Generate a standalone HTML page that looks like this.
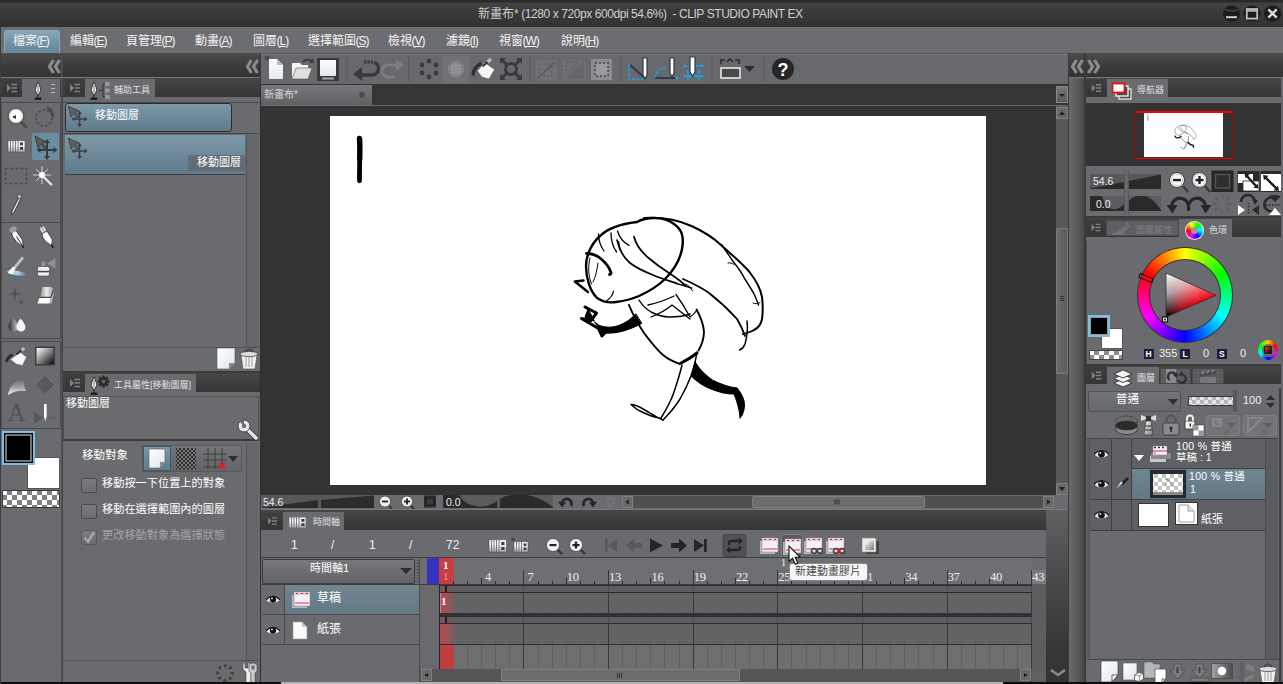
<!DOCTYPE html>
<html lang="zh-Hant">
<head>
<meta charset="utf-8">
<title>CLIP STUDIO PAINT EX</title>
<style>
*{box-sizing:border-box;margin:0;padding:0}
html,body{width:1283px;height:684px;overflow:hidden;background:#6a6b6e}
body{position:relative;font-family:"Liberation Sans","Noto Sans CJK TC",sans-serif;font-size:12px;color:#f0f0f0}
.a{position:absolute}
.t{position:absolute;white-space:nowrap;line-height:1}
#title{left:0;top:0;width:1283px;height:27px;background:linear-gradient(#2a2a2a 0,#2a2a2a 2px,#424242 3px,#3a3a3a 12px,#333 26px,#2c2c2c 27px)}
#menu{left:0;top:27px;width:1283px;height:26px;background:#6c6d70}
#menu .t{top:8px;font-size:12px;color:#f4f4f4}#menu .t i{font-style:normal;letter-spacing:-1px;margin-left:-.5px}
.dark{background:linear-gradient(#4b4b4b,#3a3a3a 60%,#333)}
.tabbar{background:linear-gradient(#464646,#363636)}
.tab{background:#6a6b6e}
.sel{background:linear-gradient(#7d98a8,#5f7b8b)}
</style>
</head>
<body>
<!-- TITLE -->
<div id="title" class="a"></div>
<div class="t" id="ttl" style="left:478px;top:8px;font-size:12px;color:#cfcfcf;letter-spacing:-.42px"><span style="letter-spacing:0">新畫布</span>* (1280 x 720px 600dpi 54.6%)&nbsp; - CLIP STUDIO PAINT EX</div>
<!-- MENU -->
<div id="menu" class="a">
<div class="a" style="left:4px;top:3px;width:56px;height:23px;border-radius:3px 3px 0 0;background:linear-gradient(#86a6ba,#6b8ca1 70%,#678699);border:1px solid #8aabbf;border-bottom:0"></div>
<div class="t" style="left:13px">檔案<i>(<u>F</u>)</i></div>
<div class="t" style="left:70px">編輯<i>(<u>E</u>)</i></div>
<div class="t" style="left:126px">頁管理<i>(<u>P</u>)</i></div>
<div class="t" style="left:195px">動畫<i>(<u>A</u>)</i></div>
<div class="t" style="left:253px">圖層<i>(<u>L</u>)</i></div>
<div class="t" style="left:308px">選擇範圍<i>(<u>S</u>)</i></div>
<div class="t" style="left:388px">檢視<i>(<u>V</u>)</i></div>
<div class="t" style="left:446px">濾鏡<i>(<u>I</u>)</i></div>
<div class="t" style="left:499px">視窗<i>(<u>W</u>)</i></div>
<div class="t" style="left:561px">說明<i>(<u>H</u>)</i></div>
</div>
<!--P1-->
<!-- window buttons -->
<svg class="a" style="left:1220px;top:3px" width="62" height="22" viewBox="0 0 62 22">
<g>
<ellipse cx="11.500" cy="10.500" rx="8.500" ry="8" fill="#1c1c1c"/><path d="M4.500 6.500q7 3 14 0" stroke="#4c4c4c" stroke-width="1.200" fill="none"/><rect x="6" y="13.200" width="11" height="2" fill="#cfcfcf"/>
<ellipse cx="32" cy="10.500" rx="8.500" ry="8" fill="#1c1c1c"/><rect x="26.800" y="6" width="10.400" height="9.600" fill="none" stroke="#c6c6c6" stroke-width="1.700"/><rect x="27" y="6.500" width="10" height="2.200" fill="#b4b4b4"/>
<ellipse cx="52.500" cy="10.500" rx="8.500" ry="8" fill="#1c1c1c"/><path d="M48.300 6.300l8.400 8.400M56.700 6.300l-8.400 8.400" stroke="#d8d8d8" stroke-width="2.400"/>
</g></svg>
<!-- collapse rows -->
<div class="a dark" style="left:0;top:53px;width:61px;height:24px"></div>
<div class="a dark" style="left:63px;top:53px;width:197px;height:24px"></div>
<div class="a" style="left:61px;top:53px;width:2px;height:631px;background:linear-gradient(90deg,#5a5a5c,#3c3c3e)"></div>
<div class="a" style="left:0;top:77px;width:260px;height:1px;background:#777"></div>
<svg class="a" style="left:44px;top:57px" width="18" height="18" viewBox="0 0 18 18"><g fill="none" stroke="#8c8c8c" stroke-width="3.200"><path d="M9.500 3L5.500 9.500l4 6.500M15.500 3l-4 6.500 4 6.500"/></g></svg>
<svg class="a" style="left:242px;top:57px" width="18" height="18" viewBox="0 0 18 18"><g fill="none" stroke="#8c8c8c" stroke-width="3.200"><path d="M9.500 3L5.500 9.500l4 6.500M15.500 3l-4 6.500 4 6.500"/></g></svg>
<!-- command bar -->
<div class="a" style="left:260px;top:53px;width:809px;height:31px;background:#68696c;border-top:1px solid #56575a;border-left:1px solid #3a3a3a;box-shadow:inset 0 1px #77787b"></div>
<svg class="a" style="left:260px;top:54px" width="540" height="30" viewBox="0 0 540 30">
<defs><linearGradient id="gw" x1="0" y1="0" x2="0" y2="1"><stop offset="0" stop-color="#fff"/><stop offset="1" stop-color="#e4e8ec"/></linearGradient></defs>
<!-- new -->
<path d="M9 5h8l6 6v14H9z" fill="url(#gw)"/><path d="M17 5l6 6h-6z" fill="#b8bcc0"/><path d="M7 1v6M4 4h6M5 2l4 4M9 2L5 6" stroke="#444" stroke-width="1"/>
<!-- open -->
<path d="M32 25V9h8l2 2h6v3" fill="#f4f4f4"/><path d="M32 25l4-11h16l-4 11z" fill="#e0e0e0" stroke="#555" stroke-width=".6"/><path d="M43 8q5-5 9 0" stroke="#3c3c3c" stroke-width="2.2" fill="none"/><path d="M49 9l5 0-1-5z" fill="#3c3c3c"/>
<!-- page -->
<rect x="57" y="4" width="22" height="23" fill="#3a3a3a"/><rect x="60" y="6" width="16" height="16" fill="url(#gw)"/><rect x="62" y="23.5" width="12" height="2" fill="#aaa"/>
<path d="M88 2v26" stroke="#6e6f72"/><path d="M87 2v26" stroke="#58595c"/>
<!-- undo -->
<path d="M104 8h8a6 6 0 0 1 0 13h-12" stroke="#3a3a3a" stroke-width="3.4" fill="none" stroke-dasharray="2.2 1.2 2.2 1.2 2.2 1.2 100"/><path d="M93 20l9-7v14z" fill="#3a3a3a"/>
<!-- redo dim -->
<path d="M138 11h-10a5.5 5.5 0 0 0 0 12h6" stroke="#7c7d80" stroke-width="3.2" fill="none"/><path d="M144 11l-8-6v12z" fill="#7c7d80"/>
<path d="M150 2v26" stroke="#6e6f72"/><path d="M149 2v26" stroke="#58595c"/>
<!-- dots -->
<g fill="#3a3a3a"><circle cx="169" cy="7" r="2.4"/><circle cx="169" cy="23" r="2.4"/><circle cx="162" cy="11" r="2.4"/><circle cx="176" cy="11" r="2.4"/><circle cx="162" cy="19" r="2.4"/><circle cx="176" cy="19" r="2.4"/></g>
<!-- select all -->
<rect x="183" y="2" width="26" height="27" fill="#707174"/><path d="M192 5h8v4h4v8h-4v4h-8v-4h-4v-8h4z" fill="#85868a" transform="translate(0 2)"/><rect x="190" y="9" width="12" height="12" fill="#8f9093" stroke="#707174" stroke-width="1" stroke-dasharray="2 1"/>
<!-- fill -->
<path d="M217.500 17l7-8.500 10 7-5.500 9.500-7-2z" fill="#f6f6f6" stroke="#555" stroke-width=".5"/><path d="M213 21.500q0-8 8.500-12.500" stroke="#2e2e30" stroke-width="3.200" fill="none"/><path d="M222.500 12.500l8-7" stroke="#2e2e30" stroke-width="1.800"/><path d="M227.500 8l3.500-3" stroke="#bcbcbe" stroke-width="3.400"/>
<!-- expand -->
<g stroke="#3a3a3a" stroke-width="3" fill="none"><circle cx="251" cy="15" r="5.5"/><path d="M242 6l5 5M260 6l-5 5M242 24l5-5M260 24l-5-5"/></g><g fill="#3a3a3a"><path d="M240 4h6l-6 6zM262 4h-6l6 6zM240 26h6l-6-6zM262 26h-6l6-6z"/></g>
<path d="M271 2v26" stroke="#6e6f72"/><path d="M270 2v26" stroke="#58595c"/>
<!-- dim 3 -->
<g opacity=".55"><rect x="276" y="6" width="21" height="20" fill="#777"/><path d="M278 24l17-16" stroke="#555" stroke-width="2"/><rect x="279" y="10" width="13" height="12" fill="none" stroke="#555" stroke-dasharray="2 2"/>
<rect x="303" y="6" width="22" height="20" fill="#777"/><path d="M304 25l20-18v18z" fill="#666"/><path d="M306 8h12l-12 12z" fill="none" stroke="#555" stroke-dasharray="2 2"/></g>
<rect x="331" y="5" width="21" height="21" fill="#8b8c8f"/><rect x="335" y="9" width="13" height="13" fill="#9a9b9e" stroke="#55565a" stroke-width="2" stroke-dasharray="2 2"/>
<path d="M362 2v26" stroke="#6e6f72"/><path d="M361 2v26" stroke="#58595c"/>
<!-- snap icons -->
<path d="M369 10l17 15" stroke="#2c3a48" stroke-width="2"/><path d="M369 10v15h17" stroke="#1ea0f0" stroke-width="1.6" fill="none" stroke-dasharray="3 1.5"/><path d="M383 4h4v17l-2 4-2-4z" fill="#fff" stroke="#2c3a48" stroke-width="1.2"/>
<path d="M395 24q1-10 12-10" stroke="#1ea0f0" stroke-width="1.6" fill="none" stroke-dasharray="3 1.5"/><path d="M395 24h20" stroke="#2c3a48" stroke-width="2"/><path d="M410 4h4v15l-2 4-2-4z" fill="#fff" stroke="#2c3a48" stroke-width="1.2"/><circle cx="417" cy="24" r="1.6" fill="#1ea0f0"/>
<path d="M423 12h21M423 22h21M428 16v11M439 16v11" stroke="#1ea0f0" stroke-width="1.8" stroke-dasharray="4 1.5"/><path d="M430 3h5v15l-2.5 4-2.500-4z" fill="#fff" stroke="#2c3a48" stroke-width="1.2"/>
<path d="M453 2v26" stroke="#6e6f72"/><path d="M452 2v26" stroke="#58595c"/>
<!-- frame -->
<path d="M461 10V6h4M479 10V6h-4M467 8l3-3 3 3" stroke="#2e2e2e" stroke-width="1.6" fill="none"/><rect x="461" y="14" width="19" height="10" fill="#4a4a4a" stroke="#e8e8e8" stroke-width="1.6"/><path d="M484 12h11l-5.500 6z" fill="#2e2e2e"/>
<path d="M505 2v26" stroke="#6e6f72"/><path d="M504 2v26" stroke="#58595c"/>
<circle cx="523" cy="15" r="11" fill="#262626"/><text x="523" y="21.500" font-family="Liberation Sans,sans-serif" font-weight="bold" font-size="18" fill="#fff" text-anchor="middle">?</text>
</svg>
<!-- canvas tab row -->
<div class="a" style="left:260px;top:84px;width:809px;height:22px;background:#353535;border-bottom:1px solid #6a6a6a"></div>
<div class="a" style="left:261px;top:85px;width:111px;height:20px;background:linear-gradient(#77787b,#5f6063)"></div>
<div class="t" style="left:264px;top:90px;font-size:10px;color:#d8d8d8">新畫布*</div>
<div class="a" style="left:359px;top:92px;width:6px;height:6px;border-radius:3px;background:#4c4c4c"></div>
<div class="a" style="left:1056px;top:86px;width:12px;height:17px;background:linear-gradient(#777,#5a5a5a);border:1px solid #888"></div>
<div class="a" style="left:1059px;top:94px;border:3px solid transparent;border-top:3px solid #222;width:0;height:0"></div>
<!--/P1-->
<!--P2-->
<!-- TOOL PALETTE -->
<svg width="0" height="0" style="position:absolute"><defs>
<symbol id="pm" viewBox="0 0 20 18"><rect width="20" height="18" fill="#3c3c3c"/><rect y="9" width="20" height="9" fill="#363636"/><path d="M5 5l4 4-4 4z" fill="#808080"/><path d="M9.500 5.500h5.500M9.500 9h5.500M9.500 12.500h5.500" stroke="#808080" stroke-width="1.500"/></symbol>
<symbol id="eye" viewBox="0 0 16 10"><path d="M0 5.500Q8-3 16 5.500Q8 12 0 5.500z" fill="#f0f0f0"/><circle cx="8" cy="5" r="3.600" fill="#111"/><circle cx="6.800" cy="3.800" r="1" fill="#fff"/><path d="M0 5.500Q8-3 16 5.500" stroke="#111" stroke-width="1.300" fill="none"/></symbol>
<symbol id="penic" viewBox="0 0 12 22"><path d="M6 0Q2.500 8 3 10.500L5 15h2l2-4.500Q9.500 8 6 0z" fill="#fff" stroke="#222" stroke-width="1"/><path d="M6 4v9" stroke="#222" stroke-width=".8"/><path d="M6 15v4" stroke="#222" stroke-width="1.400"/><rect x="2" y="19" width="8" height="2.500" fill="#111"/></symbol>
<linearGradient id="gm" x1="0" y1="0" x2="1" y2="1"><stop offset="0" stop-color="#fff"/><stop offset="1" stop-color="#777"/></linearGradient>
<pattern id="chk" width="10" height="10" patternUnits="userSpaceOnUse"><rect width="10" height="10" fill="#fff"/><rect x="5" width="5" height="5" fill="#808080"/><rect y="5" width="5" height="5" fill="#808080"/></pattern>
</defs></svg>
<div class="a tabbar" style="left:0;top:78px;width:61px;height:19px"></div>
<svg class="a" style="left:2px;top:79px" width="20" height="18"><use href="#pm"/></svg>
<div class="a tab" style="left:22px;top:79px;width:38px;height:19px"></div>
<svg class="a" style="left:33px;top:81px" width="10" height="20"><use href="#penic"/></svg>
<div class="a" style="left:51px;top:84px;width:4px;height:1px;background:#bbb;box-shadow:0 4px #bbb,0 8px #bbb"></div>
<div class="a" style="left:1px;top:102px;width:60px;height:121px;border:1px solid #4c4c4f"></div>
<div class="a" style="left:1px;top:222px;width:60px;height:117px;border:1px solid #4c4c4f"></div>
<div class="a" style="left:1px;top:341px;width:60px;height:88px;border:1px solid #4c4c4f"></div>
<div class="a" style="left:32px;top:133px;width:27px;height:27px;background:#6b8da2;border-radius:2px"></div>
<svg class="a" style="left:0;top:102px" width="62" height="330" viewBox="0 102 62 330">
<!-- magnifier -->
<path d="M20 121l7 7" stroke="#4a4a4a" stroke-width="3"/><circle cx="16" cy="116" r="6.500" fill="#fff" stroke="#dcdcdc" stroke-width="1.500"/><circle cx="16" cy="116" r="8" fill="none" stroke="#4a4a4a" stroke-width=".8"/><path d="M12 117l4-2v4z" fill="#333"/>
<!-- rotate -->
<circle cx="44" cy="118" r="8" fill="none" stroke="#48494c" stroke-width="1.600" stroke-dasharray="2.500 2"/><path d="M47 108q6 2 6 9" stroke="#48494c" stroke-width="2.500" fill="none"/>
<!-- film -->
<rect x="8" y="140.500" width="17" height="11.500" fill="url(#gf)" stroke="#505154" stroke-width=".6"/><path d="M10.500 141v11M13 141v11M15.500 141v11M18 141v11" stroke="#6a6b6e" stroke-width=".9"/><rect x="20" y="142.500" width="3" height="2.800" fill="#3a3a5c"/><rect x="20" y="147" width="3" height="2.800" fill="#3a3a5c"/>
<!-- move -->
<path d="M35 136l3 12 2.500-3.500 4 5 2-1.500-4-5 4-1z" fill="#5a5a5a" stroke="#333" stroke-width=".8"/><path d="M47 142v16M39 150h16" stroke="#3a3a3a" stroke-width="2"/><path d="M47 139l3 4h-6zM47 160l3-4h-6zM36.500 150l4-3v6zM57.500 150l-4-3v6z" fill="#3a3a3a"/>
<!-- dashed rect -->
<rect x="5.500" y="168.500" width="21" height="15" fill="none" stroke="#4a4a4d" stroke-width="1.400" stroke-dasharray="3 2"/>
<!-- wand -->
<path d="M42 175l10 10" stroke="#ddd" stroke-width="2.600"/><path d="M43 176l9 9" stroke="#555" stroke-width=".8" transform="translate(1 -1)"/><path d="M42 166v18M33 175h18M36 169l12 12M48 169l-12 12" stroke="#e8e8e8" stroke-width="1" opacity=".8"/><circle cx="42" cy="175" r="3" fill="#fff"/>
<!-- eyedropper -->
<path d="M19 197l-7 14-1 4 3-2.500 7-14z" fill="#ddd" stroke="#3a3a3a" stroke-width="1"/><circle cx="19.500" cy="196.500" r="2.200" fill="#bbb" stroke="#3a3a3a" stroke-width=".8"/>
<!-- pen -->
<path d="M11.500 232.500l4.500-2 6.500 9.500.8 7-6.300-4.500-4.500-6z" fill="#f4f4f4" stroke="#3a3a3a" stroke-width=".9"/><ellipse cx="13" cy="229.500" rx="3.800" ry="2.800" fill="#9c9d9f" transform="rotate(-25 13 229.500)"/><path d="M16.500 236.500l6.200 9.800" stroke="#2a2a2a" stroke-width="1"/><path d="M22.500 245.500l1 2.500" stroke="#222" stroke-width="1.400"/>
<!-- brush pen -->
<path d="M42 233.500l5-2.500 5.500 9-1 5.500-5.500-3.500-3.500-5z" fill="#fafafa" stroke="#3a3a3a" stroke-width=".9"/><path d="M38.500 228.500l6-3 2.500 5-5 3z" fill="#b0b1b3" stroke="#444" stroke-width=".6"/><path d="M40.500 227.500l2.500 5M42.800 226.300l2.500 5" stroke="#f0f0f0" stroke-width="1"/><path d="M51.500 245l1.800 2.800" stroke="#222" stroke-width="1.800"/>
<!-- brush -->
<defs><linearGradient id="bl" x1="0" y1="0" x2="1" y2="0"><stop offset="0" stop-color="#8cc8f4"/><stop offset=".55" stop-color="#a8d4f4"/><stop offset="1" stop-color="#c8b8e0" stop-opacity=".2"/></linearGradient></defs>
<ellipse cx="16.500" cy="273" rx="9.500" ry="2.300" fill="url(#bl)" transform="rotate(9 16.500 273)"/><path d="M23 257.500l-8.500 10.500" stroke="#c4c4c6" stroke-width="2.800"/><path d="M24.200 258.300l-8.500 10.500" stroke="#77787a" stroke-width=".9"/><circle cx="13.500" cy="268.500" r="1.800" fill="#fff"/><path d="M12 268l3 3-3 3.500-4-1.500q1-3 4-5z" fill="#f8f8f8"/>
<!-- spray -->
<rect x="37.500" y="266.500" width="12" height="9.500" rx="2" fill="#f2f2f2" stroke="#4a4a4a" stroke-width=".7"/><rect x="37.500" y="270.800" width="12" height="1.600" fill="#4a4a4a"/><rect x="41" y="261" width="5" height="5.500" fill="#909193" stroke="#555" stroke-width=".5"/><path d="M47 263.500l8.500-5.500v10.500z" fill="#8d8e91"/>
<!-- sparkle -->
<path d="M15 287l1 6 6 1-6 1-1 6-1-6-6-1 6-1z" fill="#4c4d50"/><path d="M21 298l.7 3.300 3.300.7-3.300.7-.7 3.300-.7-3.300-3.300-.7 3.300-.7z" fill="#4c4d50"/>
<!-- eraser -->
<defs><linearGradient id="ge" x1="0" y1="0" x2="1" y2="0"><stop offset="0" stop-color="#8a8a8c"/><stop offset=".5" stop-color="#e8e8e8"/><stop offset="1" stop-color="#a0a0a2"/></linearGradient></defs>
<path d="M42 286.500h9.500l2 2.500-2.500 8.500h-11.500z" fill="url(#ge)" stroke="#505154" stroke-width=".6"/><path d="M39.500 297.500h11.500l-1.500 6h-12z" fill="#fafafa"/><path d="M51 297.500l2.500-8.500v6l-2 8.500h-2z" fill="#b8b8ba"/><path d="M39.500 297.300h11.500l2.300-7" stroke="#2e2e2e" stroke-width="1" fill="none"/>
<!-- blend drops -->
<defs><linearGradient id="gdp" x1="0" y1="0" x2="1" y2="0"><stop offset="0" stop-color="#2a2a2c"/><stop offset="1" stop-color="#c8c8ca"/></linearGradient></defs>
<path d="M13 317.500q7 8 4 12.500q-4 3-7.500 0q-3.500-5 3.500-12.500z" fill="url(#gdp)"/><path d="M20.500 318.500q7 7.500 4 11.500q-3.500 3-7 0q-3-4 3-11.500z" fill="#f6f6f6"/>
<!-- fill -->
<path d="M10.500 359.500l9.500-7.500 6.500 5-4 8.500-6.500-1.500z" fill="#f6f6f6" stroke="#58595c" stroke-width=".5"/><path d="M12.500 354.500q-5 2.500-6 7.500" stroke="#2e2e30" stroke-width="3" fill="none"/><path d="M16.500 354.500l7-6" stroke="#2e2e30" stroke-width="1.800"/><path d="M21.500 350.500l3-2.500" stroke="#b8b8ba" stroke-width="3"/>
<!-- gradient -->
<linearGradient id="gd" x1="0" y1="0" x2="1" y2="1"><stop offset="0" stop-color="#fff"/><stop offset=".5" stop-color="#8a8486"/><stop offset="1" stop-color="#0c0808"/></linearGradient>
<rect x="35" y="346.500" width="20" height="19" fill="#3c3c3e"/><rect x="36.500" y="348" width="17" height="16" fill="url(#gd)"/>
<!-- contour -->
<linearGradient id="gc" x1="0" y1="0" x2="0" y2="1"><stop offset="0" stop-color="#58595c"/><stop offset=".6" stop-color="#a8a8aa"/><stop offset="1" stop-color="#fff"/></linearGradient>
<path d="M8 395q2-14 17.500-17.500q-3 7 .5 13.500q-10-1.500-18 4z" fill="url(#gc)"/>
<!-- pattern -->
<g stroke="#515255" stroke-width="1.300" fill="none"><path d="M37.500 385l7.500-7.500 7.500 7.500-7.500 7.500zM41.200 381.200l7.600 7.600M48.800 381.200l-7.600 7.600M39.300 383.100l7.600 7.600M43.100 379.300l7.600 7.600M50.700 383.100l-7.600 7.600M46.900 379.300l-7.600 7.600"/></g>
<!-- text A -->
<text x="16.500" y="421" font-family="Liberation Serif,serif" font-size="25" fill="#4e4f52" text-anchor="middle">A</text>
<!-- correct -->
<path d="M34 412l9 6-9 6z" fill="#555659"/><path d="M43 418h13" stroke="#555659" stroke-width="1"/><rect x="44" y="404" width="2.600" height="13" fill="#fff"/><path d="M44 417l1.300 4.500 1.300-4.500z" fill="#e4e4e4"/>
</svg>
<!-- colours -->
<div class="a" style="left:2px;top:431px;width:33px;height:34px;border:2px solid #78c0ea;background:#000;box-shadow:inset 0 0 0 1.5px #000,inset 0 0 0 2.5px #e4e4e4;z-index:2"></div>
<div class="a" style="left:27px;top:457px;width:33px;height:32px;background:#fff;border:1px solid #555"></div>
<svg class="a" style="left:2px;top:490px" width="58" height="18"><rect x="1" y="1" width="56" height="16" fill="url(#chk)"/><rect x=".5" y=".5" width="57" height="17" fill="none" stroke="#3a3a3a"/></svg>
<!--/P2-->
<!--P3-->
<!-- SUBTOOL PANEL -->
<div class="a tabbar" style="left:63px;top:78px;width:197px;height:19px"></div>
<svg class="a" style="left:65px;top:79px" width="20" height="18"><use href="#pm"/></svg>
<div class="a tab" style="left:85px;top:79px;width:70px;height:19px"></div>
<svg class="a" style="left:89px;top:81px" width="10" height="20"><use href="#penic"/></svg>
<svg class="a" style="left:99px;top:82px" width="12" height="18" viewBox="0 0 12 18"><path d="M0 8.500h4M4 2v13M4 2h3M4 15h3" stroke="#333" stroke-width="1" fill="none"/><rect x="6" y="0" width="4.500" height="4" fill="#999"/><rect x="6" y="6.500" width="4.500" height="4" fill="#999"/><rect x="6" y="13" width="4.500" height="4" fill="#999"/></svg>
<div class="t" style="left:114px;top:86px;font-size:9px;color:#e0e0e0">輔助工具</div>
<div class="a" style="left:63px;top:102px;width:196px;height:1px;background:#4a4a4d"></div>
<div class="a sel" style="left:65px;top:103px;width:167px;height:29px;border:1px solid #2c2c2c;border-radius:3px"></div>
<div class="t" style="left:95px;top:110px;font-size:11px;color:#fff">移動圖層</div>
<div class="a" style="left:63px;top:133px;width:196px;height:1px;background:#444"></div>
<div class="a sel" style="left:65px;top:135px;width:180px;height:40px;border-bottom:1px solid #3a3a3a"></div>
<div class="a" style="left:188px;top:155px;width:57px;height:16px;background:rgba(95,100,106,.75)"></div>
<div class="t" style="left:197px;top:157px;font-size:11px;color:#fff">移動圖層</div>
<svg class="a" style="left:66px;top:104px" width="24" height="60" viewBox="0 0 24 60"><g id="mv"><path d="M2 2l3 11 2.500-3.500 3.500 4.500 1.800-1.400-3.600-4.600 4-1z" fill="#5a6268" stroke="#333" stroke-width=".7"/><path d="M13.500 9v12M7.500 15h12" stroke="#3a3f44" stroke-width="1.600"/><path d="M13.500 7l2.500 3h-5zM13.500 23l2.500-3h-5zM5.500 15l3-2.500v5zM21.500 15l-3-2.500v5z" fill="#3a3f44"/></g><use href="#mv" y="32"/></svg>
<div class="a" style="left:246px;top:135px;width:12px;height:212px;background:#656669;border-left:1px solid #55565a"></div>
<div class="a" style="left:63px;top:347px;width:196px;height:1px;background:#515255"></div>
<svg class="a" style="left:215px;top:347px" width="44" height="24" viewBox="0 0 44 24"><path d="M2 1h18v15l-6 6H2z" fill="url(#gw2)" stroke="#555" stroke-width=".6"/><path d="M20 16l-6 6v-6z" fill="#8a8a8a"/><linearGradient id="gw2" x1="0" y1="0" x2="1" y2="1"><stop offset="0" stop-color="#fff"/><stop offset="1" stop-color="#dfe6ec"/></linearGradient>
<path d="M26 8h16l-2 14H28z" fill="#f2f2f2" stroke="#555" stroke-width=".7"/><path d="M31 10v10M34 10v10M37 10v10" stroke="#999" stroke-width="1"/><ellipse cx="34" cy="7" rx="9" ry="2.600" fill="#ddd" stroke="#444" stroke-width=".8"/><path d="M30 5q4-6 8 0" stroke="#444" stroke-width="1.400" fill="none"/></svg>
<div class="a" style="left:63px;top:371px;width:197px;height:2px;background:#3a3a3a"></div>
<!-- TOOL PROPERTY -->
<div class="a tabbar" style="left:63px;top:373px;width:197px;height:19px"></div>
<svg class="a" style="left:65px;top:374px" width="20" height="18"><use href="#pm"/></svg>
<div class="a tab" style="left:85px;top:374px;width:111px;height:19px"></div>
<svg class="a" style="left:89px;top:376px" width="10" height="20"><use href="#penic"/></svg>
<svg class="a" style="left:97px;top:375px" width="13" height="13" viewBox="-6.500 -6.500 13 13"><g fill="#2c2c2c"><circle r="4.200"/><g id="gt"><rect x="-1.300" y="-6" width="2.600" height="12"/><rect x="-1.300" y="-6" width="2.600" height="12" transform="rotate(45)"/><rect x="-1.300" y="-6" width="2.600" height="12" transform="rotate(90)"/><rect x="-1.300" y="-6" width="2.600" height="12" transform="rotate(135)"/></g></g><circle r="1.800" fill="#6a6b6e"/></svg>
<div class="t" style="left:114px;top:381px;font-size:9px;color:#e0e0e0">工具屬性[移動圖層]</div>
<div class="a" style="left:63px;top:396px;width:196px;height:45px;border:1px solid #505154;border-bottom:2px solid #3a3a3a"></div>
<div class="t" style="left:66px;top:398px;font-size:11px;color:#fff">移動圖層</div>
<svg class="a" style="left:236px;top:418px" width="23" height="23" viewBox="0 0 23 23"><path d="M10 10l10 10" stroke="#444" stroke-width="5.500" stroke-linecap="round"/><path d="M10 10l10 10" stroke="#e8e8e8" stroke-width="3.500" stroke-linecap="round"/><circle cx="8" cy="8" r="6" fill="#e8e8e8" stroke="#444" stroke-width="1"/><path d="M8 8L2 2h6z" fill="#6a6b6e"/><circle cx="8" cy="8" r="2.200" fill="#6a6b6e"/></svg>
<div class="a" style="left:246px;top:443px;width:12px;height:217px;background:#656669;border-left:1px solid #55565a"></div>
<div class="t" style="left:82px;top:450px;font-size:11.500px;color:#fff">移動對象</div>
<div class="a" style="left:142px;top:445px;width:100px;height:27px;border:1px solid #555659;border-radius:2px;background:linear-gradient(#747578,#636467)"></div>
<div class="a" style="left:143px;top:446px;width:28px;height:25px;background:linear-gradient(#7898ac,#5b7a8c);border:1px solid #445866"></div>
<svg class="a" style="left:143px;top:446px" width="98" height="25" viewBox="0 0 98 25"><path d="M6 3h16v13l-5 6H6z" fill="url(#gw2)" stroke="#555" stroke-width=".6"/><path d="M22 16l-5 6v-6z" fill="#8a8a8a"/>
<pattern id="dk" width="4" height="4" patternUnits="userSpaceOnUse"><rect width="4" height="4" fill="#2e2e2e"/><rect width="2" height="2" fill="#777"/><rect x="2" y="2" width="2" height="2" fill="#777"/></pattern>
<rect x="33" y="2" width="20" height="22" fill="url(#dk)"/>
<path d="M65 2v21M72 2v21M79 2v17M60 8h24M60 14h24M60 21h17" stroke="#3c3c3c" stroke-width="1"/><path d="M76 17l6 6M82 17l-6 6" stroke="#e02020" stroke-width="2.200"/><path d="M85 10h10l-5 6z" fill="#2e2e2e"/></svg>
<div class="a" style="left:81px;top:478px;width:16px;height:15px;border:1px solid #4c4c4f;border-radius:2px;background:linear-gradient(#7a7b7e,#6c6d70)"></div>
<div class="a" style="left:81px;top:504px;width:16px;height:15px;border:1px solid #4c4c4f;border-radius:2px;background:linear-gradient(#7a7b7e,#6c6d70)"></div>
<div class="a" style="left:81px;top:530px;width:16px;height:15px;border:1px solid #58595c;border-radius:2px;background:linear-gradient(#7a7b7e,#6c6d70)"></div>
<svg class="a" style="left:82px;top:531px" width="14" height="14" viewBox="0 0 14 14"><path d="M2.500 6.500l3.500 4 6-9" stroke="#a8a9ab" stroke-width="2.400" fill="none"/></svg>
<div class="t" style="left:102px;top:478px;font-size:11.200px;color:#fff">移動按一下位置上的對象</div>
<div class="t" style="left:102px;top:504px;font-size:11.200px;color:#fff">移動在選擇範圍內的圖層</div>
<div class="t" style="left:102px;top:530px;font-size:11.200px;color:#a2a3a6">更改移動對象為選擇狀態</div>
<div class="a" style="left:63px;top:660px;width:196px;height:1px;background:#515255"></div>
<svg class="a" style="left:213px;top:661px" width="46" height="23" viewBox="0 0 46 23"><g transform="translate(12 12)" fill="#3c3c3c"><g id="sp"><path d="M-1.500 -9l4 1-3 3z"/></g><use href="#sp" transform="rotate(45)"/><use href="#sp" transform="rotate(90)"/><use href="#sp" transform="rotate(135)"/><use href="#sp" transform="rotate(180)"/><use href="#sp" transform="rotate(225)"/><use href="#sp" transform="rotate(270)"/><use href="#sp" transform="rotate(315)"/></g>
<path d="M30 2v6l3 3v12h5V11l-1-2V2h-2v5h-3V2z" fill="#eee" stroke="#444" stroke-width=".6"/><path d="M36 4q4-4 8 0v6l-2 2v11h-4V12l-2-2z" fill="#ccc" stroke="#444" stroke-width=".6"/><path d="M38.500 4.500h3v4h-3z" fill="#6a6b6e"/></svg>
<!--/P3-->
<!--P4-->
<!-- CANVAS AREA -->
<div class="a" style="left:260px;top:106px;width:795px;height:389px;background:#333"></div>
<div class="a" style="left:260px;top:85px;width:1px;height:599px;background:#2e2e2e"></div>
<div class="a" style="left:330px;top:116px;width:656px;height:369px;background:#fff"></div>
<svg class="a" style="left:330px;top:116px" width="656" height="369" viewBox="330 116 656 369" fill="none" stroke="#000" stroke-linecap="round" stroke-linejoin="round">
<path d="M359.500 138.500c.6 8 .3 14 .2 20" stroke-width="5.400"/><path d="M359.700 158c0 8-.3 15-.2 22.800" stroke-width="4.800"/>
<g id="girl">
<!-- head -->
<path d="M637 222c-17 2-30 7-37 14-9 8-14 20-14 30 0 12 4 25 11 32 6 4 13 5 19 4 8-1 16-3 23-6 11-5 20-11 26-17 9-9 16-21 17.500-33 1-9 0-16-8.500-22-5-4-12-6-19-6-7 0-13 1-18 4z" stroke-width="2.400"/>
<!-- outer hair -->
<path d="M644 218c16-1 32 1 47.500 8 11 5 21 11 29.500 19 11 10 21 18 28.500 27 7 9 11 16 12.500 25 1 8 1 15 0 22-1 6-4 9-8 11-3 2-7 3-11 4" stroke-width="2"/>
<path d="M721.500 244.500c4 6 8 11.500 12 17.500 4.500 5.500 8.500 11 11 16.500 4 6 8 12 10.500 17.500 1.500 3.500 2.500 6 3.500 9" stroke-width="1.400"/>
<path d="M728 263c2-.5 4 0 6 1.500M753 303c2 1 5 1 7-.5" stroke-width="1"/>
<path d="M747 321c1 8 0 16-2 23-1 3-3 5-5.500 6" stroke-width="1.500"/>
<!-- inner hair curves -->
<path d="M634 236.500c2 9 7 15 14 21 7 6 14 11 21 15.500 6 4 12 8 17 13" stroke-width="1.700"/>
<path d="M617 240c2 9 6 17 13 23 9 7 18 10 28 14 8 3 15 5 20 7 5 1 10 3 13.500 4" stroke-width="1.700"/>
<path d="M683 279c9 4 18 8 26 14 9 7 19 16 28 26 3 5 6 11 8 17" stroke-width="1.800"/>
<path d="M686 284c3 2 5 4 6.500 7" stroke-width="1"/>
<!-- bangs -->
<path d="M598.500 234c0 6 2 12 5.500 17M611 233c0 7 2 14 5.600 19M617.500 231c2 7 6 11.500 11.500 14.400M618.500 241.600c.5 4 1.500 8 3.500 11.400" stroke-width="1.300"/>
<!-- face -->
<path d="M586.500 253.500c5 0 9.500 1.500 13.500 4.500 5 4 9 8 11 14.500 0 1.500-.5 2-1.500 2" stroke-width="2.800"/>
<path d="M590 258c-2 8-2 17 1.500 26M598 263c-1 7-2 13-5 19" stroke-width="1"/>
<path d="M583.500 280.500l-8.700 1 13.200 10.500" stroke-width="2.400"/>
<path d="M613.500 291c-.5 4-3 7-6.500 9.500" stroke-width="1.200"/>
<!-- collar -->
<path d="M639 300c3 5 7 9 12 12 6 3 12 5 18 5 7 0 14 0 21-3" stroke-width="1.400"/>
<path d="M648 305c9-2 18-5 26-9M651 317c8-3 15-7 21-12l18 14M676 294.500c5 7 10 15 14 22.500 3-2 5-4 7-7" stroke-width="1.300"/>
<!-- body -->
<path d="M629 305c4 10 9 19 15 28 6 8 12 16 19 22 5 4 11 7 17 9" stroke-width="2"/>
<path d="M696.500 309.500c3.500 6 6.500 13 7.500 22 0 7-2 13-5.500 19" stroke-width="1.900"/>
<path d="M681 363c6-3 11-6 16-10" stroke-width="3"/>
<!-- front leg -->
<path d="M682 365c-2 9-5 18-8 27-3 9-8 18-13 26" stroke-width="1.500"/>
<path d="M697 352c-1 8-3 16-6 24-3 8-7 16-11 23-5 8-11 15-17 21" stroke-width="1.500"/>
<path d="M661 418.500c-6-1-12-3-18-6-5-2-9-5-12-8 3 0 8 2 13 5 7 4 13 8 19 10.500" stroke-width="1.500"/>
<!-- arm filled -->
<path d="M635.500 314c-4 5-10 9-17 11.500-7 2.500-14 2-20 -.5l-4-3 8 11c7 .5 14 0 21-2 6-2 12-4 18-7.500z" fill="#000" stroke-width="1"/>
<path d="M585 307l11.500 6-5.500 7.500-9.500-2 17 10 3.500 7.500 5.500-6" stroke-width="3"/>
<path d="M588 309l-3 8 9 4z" fill="#000" stroke-width="1"/>
<!-- back leg filled -->
<path d="M695 362c4 7 10 13 17 18 8 4 16 7 25 8 3 4 6 8 7 13 1 6 0 12-4 17 0-6-1.500-11-3-16-1-4-2-6-3-8-8 0-16-2-24-5.500-7-3-13-7-18.500-12.500z" fill="#000" stroke-width="1.200"/>
</g>
</svg>
<!-- v scrollbar -->
<div class="a" style="left:1055px;top:106px;width:14px;height:389px;background:#58585a;border-left:1px solid #333"></div>
<div class="a" style="left:1056px;top:228px;width:12px;height:146px;background:linear-gradient(90deg,#6c6c6e,#5c5c5e);border:1px solid #7c7c7e;border-radius:1px"></div>
<div class="a" style="left:1056px;top:107px;width:12px;height:12px;background:#68686a;border:1px solid #808082"></div>
<div class="a" style="left:1056px;top:483px;width:12px;height:12px;background:#68686a;border:1px solid #808082"></div>
<div class="a" style="left:1059px;top:108px;border:3px solid transparent;border-bottom:4px solid #222;width:0;height:0"></div>
<div class="a" style="left:1059px;top:487px;border:3px solid transparent;border-top:4px solid #222;width:0;height:0"></div>
<div class="a" style="left:1060px;top:296px;width:4px;height:1px;background:#333;box-shadow:0 2px #333,0 4px #333"></div>
<!--/P4-->
<!--P5-->
<!-- STATUS BAR -->
<div class="a" style="left:261px;top:495px;width:794px;height:14px;background:#6a6b6e"></div>
<svg class="a" style="left:261px;top:495px" width="794" height="14" viewBox="261 495 794 14">
<rect x="262" y="495" width="56" height="13" fill="#3a3a3a"/><path d="M262 508h56v-13z" fill="#5c5c5e" transform="translate(580 0) scale(-1 1)" opacity="0"/>
<rect x="262" y="495" width="56" height="13" fill="#2c2c2c"/><path d="M262 495h56v5l-56 7.500z" fill="#58585a"/>
<rect x="318" y="495" width="3" height="13" fill="#5a5a5c"/>
<rect x="321" y="495" width="53" height="13" fill="#2c2c2c"/><path d="M321 495h53v.5l-53 4.500z" fill="#58585a"/>
<g id="zm"><path d="M389 506l3 3" stroke="#333" stroke-width="2"/><circle cx="385" cy="501.500" r="5.500" fill="#f0f0f0" stroke="#444" stroke-width=".8"/><rect x="382" y="500.600" width="6" height="1.800" fill="#222"/></g>
<g><path d="M411 506l3 3" stroke="#333" stroke-width="2"/><circle cx="407" cy="501.500" r="5.500" fill="#f0f0f0" stroke="#444" stroke-width=".8"/><rect x="404" y="500.600" width="6" height="1.800" fill="#222"/><rect x="406.100" y="498.500" width="1.800" height="6" fill="#222"/></g>
<rect x="424" y="495.500" width="12" height="12" fill="#2a2a2a"/><rect x="426.500" y="498" width="7" height="7" fill="#3c3c3c" stroke="#1a1a1a"/>
<rect x="443" y="495" width="54" height="13" fill="#2a2a2a"/><path d="M459 495h38v6q-8 6-19 5.500q-13-1-19-11.500z" fill="#5c5c5f"/>
<rect x="497" y="495" width="3" height="13" fill="#5a5a5c"/>
<rect x="500" y="495" width="53" height="13" fill="#5c5c5f"/><path d="M500 508v-9q6-4 14-4h13q13 2 26 12v1z" fill="#2a2a2a"/>
<g fill="none" stroke="#262626" stroke-width="2.800"><path d="M562 504a4.800 4.800 0 1 1 9 2"/><path d="M593 504a4.800 4.800 0 1 0-9 2"/></g><path d="M558 501.500l4 6 4-5zM597 501.500l-4 6-4-5z" fill="#262626"/>
<circle cx="610" cy="502" r="4" fill="none" stroke="#7c7d80" stroke-width="2" stroke-dasharray="1.600 1.500"/>
<rect x="622" y="496" width="432" height="12" fill="#505052"/><rect x="622.500" y="496.500" width="10" height="11" fill="#68686a" stroke="#808082"/><rect x="1043.500" y="496.500" width="10" height="11" fill="#68686a" stroke="#808082"/><path d="M629 499.500v5l-3.500-2.500zM1047 499.500v5l3.500-2.500z" fill="#222"/>
<rect x="752.500" y="496.500" width="172" height="11" rx="1" fill="#6c6c6e" stroke="#7e7e80"/><path d="M835 499.500v5M837 499.500v5M839 499.500v5" stroke="#333" stroke-width="1"/>
</svg>
<div class="t" style="left:263px;top:497px;font-size:10.500px;color:#ececec">54.6</div>
<div class="t" style="left:446px;top:497px;font-size:10.500px;color:#ececec">0.0</div>
<div class="a" style="left:261px;top:509px;width:808px;height:1px;background:#7a7a7c"></div>
<!-- TIMELINE PANEL -->
<div class="a tabbar" style="left:261px;top:510px;width:785px;height:20px"></div>
<div class="a" style="left:1046px;top:510px;width:23px;height:174px;background:linear-gradient(#606062,#4c4c4e 35%,#383838 75%,#333)"></div>
<svg class="a" style="left:263px;top:513px" width="19" height="16"><use href="#pm"/></svg>
<div class="a tab" style="left:283px;top:512px;width:61px;height:19px"></div>
<svg class="a" style="left:289px;top:517px" width="17" height="11" viewBox="0 0 17 11"><rect width="17" height="11" fill="url(#gf)" stroke="#505154" stroke-width=".6"/><path d="M2.500 0v11M5 0v11M7.500 0v11M10 0v11" stroke="#6a6b6e" stroke-width=".9"/><rect x="12.300" y="2" width="3.200" height="2.800" fill="#3a3a5c"/><rect x="12.300" y="6.300" width="3.200" height="2.800" fill="#3a3a5c"/></svg>
<div class="t" style="left:313px;top:518px;font-size:9px;color:#e0e0e0">時間軸</div>
<div class="a" style="left:261px;top:557px;width:785px;height:1px;background:#3e3e40"></div>
<div class="t" style="left:291px;top:539px;font-size:12px;color:#f0f0f0">1</div>
<div class="t" style="left:331px;top:539px;font-size:12px;color:#f0f0f0">/</div>
<div class="t" style="left:369px;top:539px;font-size:12px;color:#f0f0f0">1</div>
<div class="t" style="left:409px;top:539px;font-size:12px;color:#f0f0f0">/</div>
<div class="t" style="left:446px;top:539px;font-size:12px;color:#f0f0f0">72</div>
<svg class="a" style="left:480px;top:531px" width="420" height="27" viewBox="480 531 420 27">
<linearGradient id="gf" x1="0" y1="0" x2="0" y2="1"><stop offset="0" stop-color="#e0e0e0"/><stop offset=".35" stop-color="#fff"/><stop offset="1" stop-color="#a8a8aa"/></linearGradient><rect x="489" y="539.500" width="17.500" height="12.500" fill="url(#gf)" stroke="#505154" stroke-width=".6"/><path d="M491.500 540v12M494 540v12M496.500 540v12M499 540v12" stroke="#6a6b6e" stroke-width=".9"/><rect x="501.300" y="542" width="3.200" height="3" fill="#3a3a5c"/><rect x="501.300" y="547" width="3.200" height="3" fill="#3a3a5c"/>
<rect x="514" y="541.500" width="14" height="10.500" fill="url(#gf)" stroke="#505154" stroke-width=".6"/><path d="M516.500 542v10M519 542v10M521.500 542v10" stroke="#6a6b6e" stroke-width=".9"/><rect x="523.600" y="543.500" width="2.800" height="2.600" fill="#3a3a5c"/><rect x="523.600" y="547.500" width="2.800" height="2.600" fill="#3a3a5c"/><path d="M513 537.500v4M511 539.500h4M511.600 538.100l2.800 2.800M514.400 538.100l-2.800 2.800" stroke="#3a3a3a" stroke-width=".7"/>
<path d="M558 550l4 4" stroke="#333" stroke-width="2.400"/><circle cx="553" cy="545" r="6.500" fill="#f4f4f4" stroke="#444" stroke-width=".8"/><rect x="549.500" y="544" width="7" height="2.200" fill="#222"/>
<path d="M581 550l4 4" stroke="#333" stroke-width="2.400"/><circle cx="576" cy="545" r="6.500" fill="#f4f4f4" stroke="#444" stroke-width=".8"/><rect x="572.500" y="544" width="7" height="2.200" fill="#222"/><rect x="574.900" y="541.500" width="2.200" height="7" fill="#222"/>
<g fill="#58595c"><rect x="605" y="539" width="2.500" height="13"/><path d="M617 539v13l-9-6.500z"/><path d="M626 545.500l8-7v4.500h8v5h-8v4.500z"/></g>
<g fill="#262626"><path d="M650 538.500v14l13-7z"/><path d="M687 545.500l-8-7v4.500h-8v5h8v4.500z"/><path d="M694 539v13l10-6.500z"/><rect x="704" y="539" width="2.800" height="13"/></g>
<rect x="723" y="534.500" width="23" height="22" rx="2" fill="#505154" stroke="#46474a"/><g fill="none" stroke="#262626" stroke-width="2.400"><path d="M729 545v-2q0-2 3-2h8M740 546v2q0 2-3 2h-8"/></g><path d="M739 537.500l4 3.500-4 3.500zM730 546.500l-4 3.500 4 3.500z" fill="#262626"/>
<rect x="760" y="541" width="15" height="13" fill="#b8b8b8"/><rect x="762" y="538" width="16" height="14" fill="#f2f2f2" stroke="#888" stroke-width=".6"/><rect x="762" y="538" width="16" height="3" fill="#e8c8d4"/><path d="M764 539.5h2M769 539.5h2M774 539.5h2" stroke="#a03060" stroke-width="1.2"/><path d="M763 549h14" stroke="#e0409a" stroke-width="1.2"/>
<rect x="781.500" y="534.500" width="21" height="22" rx="2" fill="#5a5b5e" stroke="#808184"/>
<rect x="783" y="542" width="15" height="13" fill="#b8b8b8"/><rect x="785" y="539" width="16" height="14" fill="#f2f2f2" stroke="#888" stroke-width=".6"/><rect x="785" y="539" width="16" height="3" fill="#e8c8d4"/><path d="M787 540.5h2M792 540.5h2M797 540.5h2" stroke="#a03060" stroke-width="1.2"/><path d="M786 550h14" stroke="#e0409a" stroke-width="1.2"/>
<rect x="804" y="541" width="15" height="13" fill="#b8b8b8"/><rect x="806" y="538" width="16" height="14" fill="#f2f2f2" stroke="#888" stroke-width=".6"/><rect x="806" y="538" width="16" height="3" fill="#e8c8d4"/><path d="M808 539.5h2M813 539.5h2M818 539.5h2" stroke="#a03060" stroke-width="1.2"/><path d="M807 549h14" stroke="#e0409a" stroke-width="1.2"/>
<g fill="none" stroke="#444" stroke-width="1.600"><circle cx="814" cy="551" r="2.500"/><circle cx="820" cy="551" r="2.500"/></g>
<rect x="826" y="541" width="15" height="13" fill="#b8b8b8"/><rect x="828" y="538" width="16" height="14" fill="#f2f2f2" stroke="#888" stroke-width=".6"/><rect x="828" y="538" width="16" height="3" fill="#e8c8d4"/><path d="M830 539.5h2M835 539.5h2M840 539.5h2" stroke="#a03060" stroke-width="1.2"/><path d="M829 549h14" stroke="#e0409a" stroke-width="1.2"/>
<g fill="none" stroke="#444" stroke-width="1.600"><circle cx="836" cy="551" r="2.500"/><circle cx="842" cy="551" r="2.500"/></g><path d="M836 548l6 6M842 548l-6 6" stroke="#c02020" stroke-width="1.300"/>
<rect x="866" y="541" width="13" height="13" fill="#444"/><rect x="862" y="538" width="14" height="14" fill="#e8e8e8" stroke="#888" stroke-width=".6"/><rect x="865" y="541" width="9" height="9" fill="url(#gm)"/>
</svg>
<div class="a" style="left:262px;top:559px;width:153px;height:25px;border:1px solid #3c3c3e;border-radius:2px;background:linear-gradient(#77787b,#636467)"></div>
<div class="t" style="left:310px;top:563px;font-size:11px;color:#fff">時間軸1</div>
<div class="a" style="left:400px;top:568px;border:6px solid transparent;border-top:6px solid #2e2e2e;width:0;height:0"></div>
<div class="a" style="left:417px;top:560px;width:3px;height:23px;background:repeating-linear-gradient(#4a4a4c 0 1px,#6a6b6e 1px 3px)"></div>
<svg class="a" style="left:420px;top:558px" width="626" height="126" viewBox="420 558 626 126" shape-rendering="crispEdges">
<defs><linearGradient id="rf" x1="0" y1="0" x2="1" y2="0"><stop offset="0" stop-color="#b04a4c"/><stop offset=".35" stop-color="#a85052"/><stop offset="1" stop-color="#a85052" stop-opacity="0"/></linearGradient></defs>
<rect x="420" y="558" width="612" height="26" fill="#6e6f72"/>
<rect x="420" y="558" width="7" height="26" fill="#6e6e70"/>
<rect x="427" y="558" width="12" height="26" fill="#3434c0"/><rect x="439" y="558" width="15" height="26" fill="#c83e40"/>
<rect x="420" y="584" width="20" height="85" fill="#6a6a6c"/>
<rect x="440" y="584" width="592" height="61" fill="#636366"/><rect x="440" y="645" width="592" height="24" fill="#6e6e70"/>
<rect x="453" y="584" width="1" height="85" fill="#5f5f62"/>
<rect x="453" y="581" width="1" height="3" fill="#2e2e30"/>
<rect x="467" y="584" width="1" height="85" fill="#5f5f62"/>
<rect x="467" y="581" width="1" height="3" fill="#2e2e30"/>
<rect x="481" y="584" width="1" height="85" fill="#5f5f62"/>
<rect x="481" y="578" width="1" height="6" fill="#2e2e30"/>
<rect x="495" y="584" width="1" height="85" fill="#5f5f62"/>
<rect x="495" y="581" width="1" height="3" fill="#2e2e30"/>
<rect x="509" y="584" width="1" height="85" fill="#5f5f62"/>
<rect x="509" y="581" width="1" height="3" fill="#2e2e30"/>
<rect x="523" y="584" width="1" height="85" fill="#38383a"/>
<rect x="523" y="570" width="1" height="14" fill="#38383a"/>
<rect x="538" y="584" width="1" height="85" fill="#5f5f62"/>
<rect x="538" y="581" width="1" height="3" fill="#2e2e30"/>
<rect x="552" y="584" width="1" height="85" fill="#5f5f62"/>
<rect x="552" y="581" width="1" height="3" fill="#2e2e30"/>
<rect x="566" y="584" width="1" height="85" fill="#5f5f62"/>
<rect x="566" y="578" width="1" height="6" fill="#2e2e30"/>
<rect x="580" y="584" width="1" height="85" fill="#5f5f62"/>
<rect x="580" y="581" width="1" height="3" fill="#2e2e30"/>
<rect x="594" y="584" width="1" height="85" fill="#5f5f62"/>
<rect x="594" y="581" width="1" height="3" fill="#2e2e30"/>
<rect x="608" y="584" width="1" height="85" fill="#38383a"/>
<rect x="608" y="570" width="1" height="14" fill="#38383a"/>
<rect x="622" y="584" width="1" height="85" fill="#5f5f62"/>
<rect x="622" y="581" width="1" height="3" fill="#2e2e30"/>
<rect x="636" y="584" width="1" height="85" fill="#5f5f62"/>
<rect x="636" y="581" width="1" height="3" fill="#2e2e30"/>
<rect x="650" y="584" width="1" height="85" fill="#5f5f62"/>
<rect x="650" y="578" width="1" height="6" fill="#2e2e30"/>
<rect x="664" y="584" width="1" height="85" fill="#5f5f62"/>
<rect x="664" y="581" width="1" height="3" fill="#2e2e30"/>
<rect x="679" y="584" width="1" height="85" fill="#5f5f62"/>
<rect x="679" y="581" width="1" height="3" fill="#2e2e30"/>
<rect x="693" y="584" width="1" height="85" fill="#38383a"/>
<rect x="693" y="570" width="1" height="14" fill="#38383a"/>
<rect x="707" y="584" width="1" height="85" fill="#5f5f62"/>
<rect x="707" y="581" width="1" height="3" fill="#2e2e30"/>
<rect x="721" y="584" width="1" height="85" fill="#5f5f62"/>
<rect x="721" y="581" width="1" height="3" fill="#2e2e30"/>
<rect x="735" y="584" width="1" height="85" fill="#5f5f62"/>
<rect x="735" y="578" width="1" height="6" fill="#2e2e30"/>
<rect x="749" y="584" width="1" height="85" fill="#5f5f62"/>
<rect x="749" y="581" width="1" height="3" fill="#2e2e30"/>
<rect x="763" y="584" width="1" height="85" fill="#5f5f62"/>
<rect x="763" y="581" width="1" height="3" fill="#2e2e30"/>
<rect x="777" y="584" width="1" height="85" fill="#38383a"/>
<rect x="777" y="570" width="1" height="14" fill="#38383a"/>
<rect x="791" y="584" width="1" height="85" fill="#5f5f62"/>
<rect x="791" y="581" width="1" height="3" fill="#2e2e30"/>
<rect x="806" y="584" width="1" height="85" fill="#5f5f62"/>
<rect x="806" y="581" width="1" height="3" fill="#2e2e30"/>
<rect x="820" y="584" width="1" height="85" fill="#5f5f62"/>
<rect x="820" y="578" width="1" height="6" fill="#2e2e30"/>
<rect x="834" y="584" width="1" height="85" fill="#5f5f62"/>
<rect x="834" y="581" width="1" height="3" fill="#2e2e30"/>
<rect x="848" y="584" width="1" height="85" fill="#5f5f62"/>
<rect x="848" y="581" width="1" height="3" fill="#2e2e30"/>
<rect x="862" y="584" width="1" height="85" fill="#38383a"/>
<rect x="862" y="570" width="1" height="14" fill="#38383a"/>
<rect x="876" y="584" width="1" height="85" fill="#5f5f62"/>
<rect x="876" y="581" width="1" height="3" fill="#2e2e30"/>
<rect x="890" y="584" width="1" height="85" fill="#5f5f62"/>
<rect x="890" y="581" width="1" height="3" fill="#2e2e30"/>
<rect x="904" y="584" width="1" height="85" fill="#5f5f62"/>
<rect x="904" y="578" width="1" height="6" fill="#2e2e30"/>
<rect x="918" y="584" width="1" height="85" fill="#5f5f62"/>
<rect x="918" y="581" width="1" height="3" fill="#2e2e30"/>
<rect x="933" y="584" width="1" height="85" fill="#5f5f62"/>
<rect x="933" y="581" width="1" height="3" fill="#2e2e30"/>
<rect x="947" y="584" width="1" height="85" fill="#38383a"/>
<rect x="947" y="570" width="1" height="14" fill="#38383a"/>
<rect x="961" y="584" width="1" height="85" fill="#5f5f62"/>
<rect x="961" y="581" width="1" height="3" fill="#2e2e30"/>
<rect x="975" y="584" width="1" height="85" fill="#5f5f62"/>
<rect x="975" y="581" width="1" height="3" fill="#2e2e30"/>
<rect x="989" y="584" width="1" height="85" fill="#5f5f62"/>
<rect x="989" y="578" width="1" height="6" fill="#2e2e30"/>
<rect x="1003" y="584" width="1" height="85" fill="#5f5f62"/>
<rect x="1003" y="581" width="1" height="3" fill="#2e2e30"/>
<rect x="1017" y="584" width="1" height="85" fill="#5f5f62"/>
<rect x="1017" y="581" width="1" height="3" fill="#2e2e30"/>
<rect x="1031" y="584" width="1" height="85" fill="#38383a"/>
<rect x="1031" y="570" width="1" height="14" fill="#38383a"/>
<rect x="440" y="584" width="16" height="61" fill="url(#rf)"/><rect x="440" y="645" width="14" height="24" fill="#c03e40"/>
<rect x="440" y="585" width="592" height="1" fill="#2e2e30"/><rect x="440" y="586" width="592" height="6" fill="#5a5a5d" opacity=".6"/><rect x="440" y="592" width="592" height="1" fill="#2a2a2c"/>
<rect x="445" y="586" width="2" height="6" fill="#1a1a1a"/>
<rect x="440" y="616" width="592" height="1" fill="#2e2e30"/><rect x="440" y="617" width="592" height="6" fill="#5a5a5d" opacity=".6"/><rect x="440" y="623" width="592" height="1" fill="#2a2a2c"/>
<rect x="445" y="617" width="2" height="6" fill="#1a1a1a"/>
<rect x="420" y="584" width="612" height="1" fill="#3a3a3c"/>
<rect x="440" y="613" width="592" height="3" fill="#323234"/><rect x="440" y="644" width="592" height="1" fill="#2e2e30"/>
<rect x="439" y="584" width="1" height="85" fill="#20204a"/><rect x="440" y="593" width="1" height="20" fill="#e070a0"/>
<rect x="1032" y="584" width="14" height="100" fill="#5e5e60"/><rect x="1032" y="558" width="14" height="12" fill="#6a6b6e"/><rect x="1032" y="570" width="14" height="14" fill="#7a7b7e"/><rect x="1033" y="669" width="12" height="12" fill="#606062"/>
<rect x="420" y="669" width="612" height="13" fill="#555557"/><rect x="421.500" y="669.500" width="10" height="11" fill="#68686a" stroke="#808082"/><rect x="1020.500" y="669.500" width="10" height="11" fill="#68686a" stroke="#808082"/><path d="M428 672.500v5l-3.500-2.500zM1024 672.500v5l3.500-2.500z" fill="#222"/>
<rect x="501.500" y="669.500" width="238" height="11" rx="1" fill="#6c6c6e" stroke="#7e7e80"/><path d="M617 672.500v5M619 672.500v5M621 672.500v5" stroke="#333" stroke-width="1"/>
<rect x="420" y="682" width="626" height="2" fill="#6a6b6e"/>
</svg>
<div class="t" style="left:476.1px;top:571px;width:24px;text-align:center;font-size:12.5px;letter-spacing:-.3px;font-family:'Liberation Serif',serif;color:#f0f0f0">4</div>
<div class="t" style="left:518.4px;top:571px;width:24px;text-align:center;font-size:12.5px;letter-spacing:-.3px;font-family:'Liberation Serif',serif;color:#f0f0f0">7</div>
<div class="t" style="left:560.7px;top:571px;width:24px;text-align:center;font-size:12.5px;letter-spacing:-.3px;font-family:'Liberation Serif',serif;color:#f0f0f0">10</div>
<div class="t" style="left:603.0px;top:571px;width:24px;text-align:center;font-size:12.5px;letter-spacing:-.3px;font-family:'Liberation Serif',serif;color:#f0f0f0">13</div>
<div class="t" style="left:645.4px;top:571px;width:24px;text-align:center;font-size:12.5px;letter-spacing:-.3px;font-family:'Liberation Serif',serif;color:#f0f0f0">16</div>
<div class="t" style="left:687.7px;top:571px;width:24px;text-align:center;font-size:12.5px;letter-spacing:-.3px;font-family:'Liberation Serif',serif;color:#f0f0f0">19</div>
<div class="t" style="left:730.0px;top:571px;width:24px;text-align:center;font-size:12.5px;letter-spacing:-.3px;font-family:'Liberation Serif',serif;color:#f0f0f0">22</div>
<div class="t" style="left:772.3px;top:571px;width:24px;text-align:center;font-size:12.5px;letter-spacing:-.3px;font-family:'Liberation Serif',serif;color:#f0f0f0">25</div>
<div class="t" style="left:899.3px;top:571px;width:24px;text-align:center;font-size:12.5px;letter-spacing:-.3px;font-family:'Liberation Serif',serif;color:#f0f0f0">34</div>
<div class="t" style="left:941.6px;top:571px;width:24px;text-align:center;font-size:12.5px;letter-spacing:-.3px;font-family:'Liberation Serif',serif;color:#f0f0f0">37</div>
<div class="t" style="left:983.9px;top:571px;width:24px;text-align:center;font-size:12.5px;letter-spacing:-.3px;font-family:'Liberation Serif',serif;color:#f0f0f0">40</div>
<div class="t" style="left:1026.3px;top:571px;width:24px;text-align:center;font-size:12.5px;letter-spacing:-.3px;font-family:'Liberation Serif',serif;color:#f0f0f0">43</div>
<div class="t" style="left:867px;top:571px;font-size:12.5px;font-family:'Liberation Serif',serif;color:#f0f0f0">1</div>
<div class="t" style="left:443px;top:560px;font-size:11px;font-family:'Liberation Serif',serif;font-weight:bold;color:#fff">1</div>
<div class="t" style="left:443px;top:571px;font-size:11px;font-family:'Liberation Serif',serif;color:#f0a0a8">1</div>
<div class="t" style="left:781px;top:558px;font-size:10px;font-family:'Liberation Serif',serif;color:#f0f0f0">1</div>
<div class="t" style="left:441px;top:596px;font-size:11px;font-family:'Liberation Serif',serif;font-weight:bold;color:#fff">1</div>
<div class="a" style="left:262px;top:584px;width:158px;height:100px;background:#6a6b6e"></div>
<div class="a" style="left:262px;top:584px;width:158px;height:1px;background:#3e3e40"></div>
<div class="a" style="left:285px;top:585px;width:134px;height:29px;background:linear-gradient(#718692,#637985)"></div>
<div class="a" style="left:262px;top:614px;width:158px;height:1px;background:#48484a"></div>
<div class="a" style="left:262px;top:644px;width:158px;height:1px;background:#48484a"></div>
<div class="a" style="left:284px;top:585px;width:1px;height:59px;background:#48484a"></div>
<div class="a" style="left:419px;top:558px;width:1px;height:126px;background:#4a4a4c"></div>
<svg class="a" style="left:266px;top:595px" width="14" height="9"><use href="#eye"/></svg>
<svg class="a" style="left:266px;top:626px" width="14" height="9"><use href="#eye"/></svg>
<svg class="a" style="left:290px;top:590px" width="22" height="20" viewBox="758 536 22 20"><rect x="760" y="541" width="15" height="13" fill="#b8b8b8"/><rect x="762" y="538" width="16" height="14" fill="#f2f2f2" stroke="#888" stroke-width=".6"/><rect x="762" y="538" width="16" height="3" fill="#e8c8d4"/><path d="M764 539.5h2M769 539.5h2M774 539.5h2" stroke="#a03060" stroke-width="1.2"/><path d="M763 549h14" stroke="#e0409a" stroke-width="1.2"/></svg>
<svg class="a" style="left:292px;top:621px" width="16" height="19" viewBox="0 0 16 19"><path d="M1 1h9l5 5v12H1z" fill="#fafafa" stroke="#999" stroke-width=".6"/><path d="M10 1l5 5h-5z" fill="#c8c8c8"/></svg>
<div class="t" style="left:317px;top:592px;font-size:12px;color:#fff">草稿</div>
<div class="t" style="left:317px;top:623px;font-size:12px;color:#fff">紙張</div>
<svg class="a" style="left:1050px;top:668px" width="16" height="10" viewBox="0 0 16 10"><path d="M1 2l7 5 7-5" stroke="#8a8a8a" stroke-width="2.600" fill="none"/></svg>
<div class="a" style="left:789px;top:563px;width:79px;height:18px;background:#f6f6f6;border:1px solid #8a8a8a;border-radius:3px"></div>
<div class="t" style="left:795px;top:566px;font-size:11px;color:#4a4a4a">新建動畫膠片</div>
<svg class="a" style="left:788px;top:545px" width="14" height="21" viewBox="0 0 14 21"><path d="M1 1v15.500l3.600-3.400 2.600 6.200 2.600-1.100-2.600-6 4.800-.2z" fill="#fff" stroke="#111" stroke-width="1.100"/></svg>
<!--/P5-->
<!--P6-->
<!-- RIGHT DOCK -->
<div class="a dark" style="left:1069px;top:53px;width:214px;height:24px"></div>
<div class="a" style="left:1069px;top:77px;width:214px;height:1px;background:#777"></div>
<div class="a" style="left:1069px;top:78px;width:16px;height:606px;background:linear-gradient(90deg,#6a6a6c,#58585a 60%,#454547)"></div>
<div class="a" style="left:1084px;top:53px;width:2px;height:631px;background:#3a3a3a"></div>
<div class="a" style="left:1068px;top:53px;width:1px;height:631px;background:#3a3a3a"></div>
<svg class="a" style="left:1070px;top:57px" width="32" height="18" viewBox="0 0 32 18"><g fill="none" stroke="#8c8c8c" stroke-width="3.200"><path d="M6.500 3L2.500 9.500l4 6.500M12.500 3l-4 6.500 4 6.500M18.500 3l4 6.500-4 6.500M24.500 3l4 6.500-4 6.500"/></g></svg>
<div class="a" style="left:1281px;top:78px;width:2px;height:606px;background:#66676a;z-index:3"></div><div class="a" style="left:1279px;top:388px;width:2px;height:296px;background:#404042;z-index:3"></div>
<!-- navigator -->
<div class="a tabbar" style="left:1086px;top:78px;width:195px;height:19px"></div>
<svg class="a" style="left:1087px;top:79px" width="19" height="18"><use href="#pm"/></svg>
<div class="a tab" style="left:1107px;top:79px;width:61px;height:19px"></div>
<svg class="a" style="left:1111px;top:82px" width="22" height="18" viewBox="0 0 22 18"><rect x="8" y="7" width="12" height="10" fill="#4a4a4a" stroke="#ddd" stroke-width="1.400"/><rect x="5" y="4" width="12" height="10" fill="#4a4a4a" stroke="#eee" stroke-width="1.400"/><rect x="1.500" y="1.500" width="12" height="9" fill="#fff" stroke="#e01010" stroke-width="1.800"/></svg>
<div class="t" style="left:1137px;top:86px;font-size:9px;color:#e0e0e0">導航器</div>
<div class="a" style="left:1086px;top:103px;width:195px;height:63px;background:#333"></div>
<div class="a" style="left:1144px;top:113px;width:79px;height:44px;background:#fff"></div>
<div class="a" style="left:1135px;top:111px;width:98px;height:48px;border:1px solid #b00000;border-top:2px solid #ff0000;border-bottom-color:#f00"></div>
<svg class="a" style="left:1144px;top:113px" width="79" height="44" viewBox="330 116 656 369" fill="none" stroke="#8a8a8a" stroke-linecap="round"><path d="M359 138v40" stroke="#a09a9a" stroke-width="9"/><g stroke-width="6"><path d="M637 222c-30 4-50 20-51 44 0 14 8 32 24 36 30 0 66-24 73-60 0-20-22-26-46-20zM644 218c50-4 90 26 118 78 2 24-2 34-20 38M617 240c10 34 50 40 74 48M683 279c30 14 56 40 62 57M634 236c10 30 40 40 52 52"/><path d="M629 305c10 24 26 48 51 59M697 310c6 16 6 28 0 40" stroke="#666"/><path d="M682 365l-21 53-28-14M697 352c-6 28-18 50-34 68" stroke="#999" stroke-width="7"/></g><path d="M636 313c-14 12-28 14-40 10l-10-14" stroke="#1a1a1a" stroke-width="11"/><path d="M695 362c12 16 26 24 44 26l3 14" stroke="#1a1a1a" stroke-width="13"/></svg>
<!-- nav controls -->
<svg class="a" style="left:1086px;top:166px" width="196" height="52" viewBox="1086 166 196 52">
<rect x="1090" y="174" width="34" height="15" fill="#2a2a2a"/><path d="M1090 174h34v8l-34 6.500z" fill="#58585a"/>
<rect x="1129" y="174" width="32" height="15" fill="#2a2a2a"/><path d="M1129 174h32v.5l-32 6.500z" fill="#58585a"/>
<rect x="1090" y="196" width="34" height="15" fill="#2a2a2a"/><path d="M1102 196h22v8q-5 6-12 5q-7-2-10-13z" fill="#5c5c5f"/>
<rect x="1129" y="196" width="32" height="15" fill="#5c5c5f"/><path d="M1129 211v-10q4-5 10-5h6q8 2 16 14v1z" fill="#2a2a2a"/>
<rect x="1124" y="170" width="5" height="45" fill="#58595c"/><rect x="1125" y="170" width="3" height="45" fill="#66676a"/>
<path d="M1183 186l5 6" stroke="#3a3a3a" stroke-width="2.600"/><circle cx="1177" cy="180" r="7.500" fill="#fafafa" stroke="#3a3a3a" stroke-width="1"/><circle cx="1177" cy="180" r="5.800" fill="none" stroke="#bbb" stroke-width=".8"/><rect x="1173" y="178.900" width="8" height="2.400" fill="#222"/>
<path d="M1205 186l5 6" stroke="#3a3a3a" stroke-width="2.600"/><circle cx="1199.500" cy="180" r="7.500" fill="#fafafa" stroke="#3a3a3a" stroke-width="1"/><circle cx="1199.500" cy="180" r="5.800" fill="none" stroke="#bbb" stroke-width=".8"/><rect x="1195.500" y="178.900" width="8" height="2.400" fill="#222"/><rect x="1198.300" y="176" width="2.400" height="8" fill="#222"/>
<rect x="1211.500" y="170.500" width="22" height="21.500" fill="#262626"/><rect x="1215.500" y="174.500" width="14" height="13.500" fill="#2e2e2e" stroke="#555" stroke-width="1.400"/>
<rect x="1237.500" y="171" width="22" height="21" fill="#2a2a2a"/><rect x="1238" y="174" width="15" height="9" fill="#fff"/><rect x="1243" y="181" width="16" height="10" fill="#fff" stroke="#2a2a2a" stroke-width=".8"/><path d="M1246 175l11 12" stroke="#1a1a1a" stroke-width="2.400"/><path d="M1244.500 173.500l5 .8-4 4zM1258.500 188.500l-5-.8 4-4z" fill="#1a1a1a"/>
<rect x="1260.500" y="171" width="21" height="21" fill="#2a2a2a"/><rect x="1261" y="174" width="20" height="17" fill="#fff"/><path d="M1265 177l12 12" stroke="#1a1a1a" stroke-width="2.400"/><path d="M1263 175l5.500 .8-4.500 4.500zM1279 191l-5.500-.8 4.500-4.500z" fill="#1a1a1a"/>
<g fill="none" stroke="#262626" stroke-width="3.200"><path d="M1171.500 206a8.500 8.500 0 0 1 17 1.500v3"/><path d="M1205.500 206a8.500 8.500 0 0 0-17 1.500v3"/></g><path d="M1166.500 205l6 8.500 5-8.500zM1211.500 205l-6 8.500-5-8.500z" fill="#262626"/>
<g transform="translate(1222 204)" fill="#606164"><g id="sp2"><path d="M-1.500 -10l4 2-3 4z"/></g><use href="#sp2" transform="rotate(45)"/><use href="#sp2" transform="rotate(90)"/><use href="#sp2" transform="rotate(135)"/><use href="#sp2" transform="rotate(180)"/><use href="#sp2" transform="rotate(225)"/><use href="#sp2" transform="rotate(270)"/><use href="#sp2" transform="rotate(315)"/></g>
<path d="M1241 202a7 7 0 0 1 14 0" fill="none" stroke="#2a2a2a" stroke-width="2.600"/><path d="M1252 199l6 1-3 5z" fill="#2a2a2a"/><path d="M1238 205l7 5-7 5z" fill="#fff"/><path d="M1259 205l-7 5 7 5z" fill="#2a2a2a"/><path d="M1248.500 203v12" stroke="#2a2a2a" stroke-width="1.400" stroke-dasharray="1.500 1.500"/>
<path d="M1274 198a7 7 0 1 0 0 13" fill="none" stroke="#2a2a2a" stroke-width="2.600"/><path d="M1270 195l6 1-1 6z" fill="#2a2a2a"/><path d="M1269 196l6-1 6 1-6 6z" fill="#2a2a2a"/><path d="M1269 215l6-7 6 7z" fill="#fff"/><path d="M1266 205h15" stroke="#2a2a2a" stroke-width="1.400" stroke-dasharray="1.500 1.500"/>
</svg>
<div class="t" style="left:1093px;top:176px;font-size:10.500px;color:#ececec">54.6</div>
<div class="t" style="left:1096px;top:199px;font-size:10.500px;color:#ececec">0.0</div>
<div class="a" style="left:1086px;top:216px;width:195px;height:2px;background:#3a3a3a"></div>
<!--/P6-->
<!--P7-->
<!-- COLOR WHEEL PANEL -->
<div class="a tabbar" style="left:1086px;top:218px;width:195px;height:19px;background:linear-gradient(#444,#363636)"></div>
<svg class="a" style="left:1087px;top:219px" width="18" height="17"><use href="#pm"/></svg>
<div class="a" style="left:1106px;top:220px;width:73px;height:16px;background:#5e5f62;border:1px solid #4c4c4f"></div>
<svg class="a" style="left:1112px;top:222px" width="26" height="13" viewBox="0 0 26 13"><path d="M2 12q8-2 14-11M6 12q8-3 12-9M0 12h12" stroke="#77787b" stroke-width="1.400" fill="none"/></svg>
<div class="t" style="left:1136px;top:226px;font-size:9px;color:#7e7f82">圖層屬性</div>
<div class="a tab" style="left:1179px;top:219px;width:53px;height:22px"></div>
<div class="a" style="left:1185px;top:221px;width:19px;height:19px;border-radius:50%;background:#e8e8e8"></div>
<div class="a" style="left:1186px;top:222px;width:17px;height:17px;border-radius:50%;background:conic-gradient(from 30deg,#0f0,#0ff,#00f,#f0f,#f00,#ff0,#0f0)"></div>
<div class="a" style="left:1191px;top:227px;width:7px;height:7px;border-radius:50%;background:#9a9a9a"></div>
<div class="t" style="left:1209px;top:226px;font-size:9px;color:#dcdcdc">色環</div>
<div class="a" style="left:1086px;top:241px;width:1px;height:123px;background:#48484a"></div>
<div class="a" style="left:1137px;top:247px;width:96px;height:96px;border-radius:50%;background:#333"></div>
<div class="a" style="left:1138px;top:248px;width:94px;height:94px;border-radius:50%;background:conic-gradient(#ff0,#0f0,#0ff,#00f,#f0f,#f00,#ff0)"></div>
<div class="a" style="left:1149px;top:259px;width:72px;height:72px;border-radius:50%;background:#333"></div>
<div class="a" style="left:1150px;top:260px;width:70px;height:70px;border-radius:50%;background:#6a6b6e"></div>
<svg class="a" style="left:1130px;top:244px" width="110" height="104" viewBox="1130 244 110 104">
<defs><linearGradient id="tr1" x1="1166" y1="0" x2="1216" y2="0" gradientUnits="userSpaceOnUse"><stop offset="0" stop-color="#000"/><stop offset=".3" stop-color="#a4000d"/><stop offset=".6" stop-color="#ec0013"/><stop offset="1" stop-color="#ff0015"/></linearGradient>
<linearGradient id="tr2" x1="1182.070" y1="310.030" x2="1166" y2="273" gradientUnits="userSpaceOnUse"><stop offset="0" stop-color="#000"/><stop offset=".5" stop-color="#a0a0a0"/><stop offset="1" stop-color="#fff"/></linearGradient></defs>
<g style="isolation:isolate"><path d="M1166 273v44l50-21.700z" fill="url(#tr1)"/><path d="M1166 273v44l50-21.700z" fill="url(#tr2)" style="mix-blend-mode:screen"/></g><path d="M1166 273v44l50-21.700z" fill="none" stroke="#333" stroke-width=".8"/>
<rect x="1162.500" y="317" width="5" height="5" fill="#fff" stroke="#111" stroke-width="1.200"/><rect x="1164" y="318.500" width="2" height="2" fill="#333"/>
<g transform="rotate(22 1146 278)"><rect x="1139" y="276" width="14" height="4" fill="none" stroke="#111" stroke-width="1"/></g>
</svg>
<div class="a" style="left:1101px;top:328px;width:22px;height:21px;background:#fff;border:1px solid #555"></div>
<div class="a" style="left:1088px;top:315px;width:22px;height:22px;border:2px solid #7cc0e8;background:#000;box-shadow:inset 0 0 0 1px #999"></div>
<svg class="a" style="left:1089px;top:350px" width="34" height="10" shape-rendering="crispEdges"><pattern id="chk2" width="10" height="10" patternUnits="userSpaceOnUse"><rect width="10" height="10" fill="#fff"/><rect x="5" width="5" height="5" fill="#8c8c8c"/><rect y="5" width="5" height="5" fill="#8c8c8c"/></pattern><rect width="34" height="10" fill="url(#chk2)"/><rect x=".5" y=".5" width="33" height="9" fill="none" stroke="#444"/></svg>
<div class="a" style="left:1144px;top:349px;width:10px;height:10px;background:#1c1c3c"></div><div class="t" style="left:1145.500px;top:350px;font-size:8.500px;font-weight:bold;color:#fff">H</div>
<div class="a" style="left:1180px;top:349px;width:10px;height:10px;background:#1c1c3c"></div><div class="t" style="left:1182.500px;top:350px;font-size:8.500px;font-weight:bold;color:#fff">L</div>
<div class="a" style="left:1217px;top:349px;width:10px;height:10px;background:#1c1c3c"></div><div class="t" style="left:1219px;top:350px;font-size:8.500px;font-weight:bold;color:#fff">S</div>
<div class="t" style="left:1159px;top:348px;font-size:11px;color:#f0f0f0">355</div>
<div class="t" style="left:1203px;top:348px;font-size:11px;color:#f0f0f0">0</div>
<div class="t" style="left:1240px;top:348px;font-size:11px;color:#f0f0f0">0</div>
<div class="a" style="left:1258px;top:340px;width:20px;height:20px;border-radius:50%;background:conic-gradient(#fc0,#f00,#f0f,#00f,#0ff,#0f0,#fc0)"></div>
<div class="a" style="left:1261.500px;top:343.500px;width:13px;height:13px;border-radius:50%;background:#6a6b6e"></div>
<div class="a" style="left:1264px;top:346px;width:8px;height:8px;background:linear-gradient(135deg,#f33,#611 60%,#111);border:1px solid #222"></div>
<div class="a" style="left:1086px;top:364px;width:195px;height:2px;background:#3a3a3a"></div>
<!-- LAYER PANEL -->
<div class="a tabbar" style="left:1086px;top:366px;width:195px;height:18px;background:linear-gradient(#444,#363636)"></div>
<svg class="a" style="left:1087px;top:367px" width="19" height="17"><use href="#pm"/></svg>
<div class="a tab" style="left:1107px;top:367px;width:52px;height:22px"></div>
<svg class="a" style="left:1113px;top:369px" width="20" height="19" viewBox="0 0 20 19"><g fill="#f4f4f4" stroke="#333" stroke-width=".9"><path d="M10 10l9 4-9 4-9-4z"/><path d="M10 5.500l9 4-9 4-9-4z"/><path d="M10 1l9 4-9 4-9-4z"/></g></svg>
<div class="t" style="left:1137px;top:374px;font-size:9px;color:#e0e0e0">圖層</div>
<div class="a" style="left:1160px;top:368px;width:31px;height:16px;background:#5c5d60;border:1px solid #48484b"></div>
<svg class="a" style="left:1164px;top:368px" width="24" height="16" viewBox="0 0 24 16"><rect x="2" y="1" width="10" height="14" fill="#8a8b8e"/><g fill="none" stroke="#2e2e2e" stroke-width="2.200"><path d="M6 12a4 4 0 1 1 6-3"/><path d="M14 12a4 4 0 1 0 5-5"/></g><path d="M9 7l4 3 1-5zM17 3l3 4-5 1z" fill="#2e2e2e"/></svg>
<div class="a" style="left:1192px;top:368px;width:32px;height:16px;background:#5c5d60;border:1px solid #48484b"></div>
<svg class="a" style="left:1199px;top:370px" width="18" height="13" viewBox="0 0 18 13"><path d="M1 4l16-3v3l-16 3z" fill="#4a4b4e"/><rect x="1" y="7" width="16" height="6" fill="#77787b"/><path d="M3 4l2-3M8 3l2-3M13 2l2-3" stroke="#888" stroke-width="1.500"/></svg>
<div class="a" style="left:1088px;top:391px;width:93px;height:21px;border:1px solid #515255;border-radius:2px;background:linear-gradient(#747578,#66676a)"></div>
<div class="t" style="left:1116px;top:394px;font-size:11.500px;color:#fff">普通</div>
<div class="a" style="left:1168px;top:399px;border:5px solid transparent;border-top:6px solid #2e2e2e;width:0;height:0"></div>
<svg class="a" style="left:1188px;top:389px" width="94" height="24" viewBox="1188 389 94 24"><pattern id="chk3" x="1188" y="396" width="8" height="8" patternUnits="userSpaceOnUse"><rect width="8" height="8" fill="#e4e4e4"/><rect width="4" height="4" fill="#b4b4b4"/><rect x="4" y="4" width="4" height="4" fill="#b4b4b4"/></pattern><rect x="1188.500" y="396.500" width="45" height="9" fill="url(#chk3)" stroke="#3a3a3a"/><rect x="1233" y="390" width="4" height="22" fill="#58595c"/><path d="M1266 400l4.500-5 4.500 5zM1266 403l4.500 5 4.500-5z" fill="#2a2a2a"/></svg>
<div class="t" style="left:1243px;top:395px;font-size:11px;color:#f0f0f0">100</div>
<svg class="a" style="left:1110px;top:413px" width="170" height="25" viewBox="1110 413 170 25">
<ellipse cx="1126.500" cy="429" rx="11" ry="5.500" fill="#8a8b8e" stroke="#333" stroke-width=".8"/><ellipse cx="1126.500" cy="425.500" rx="11" ry="4.500" fill="#2c2c2c" stroke="#333" stroke-width=".8"/><ellipse cx="1126.500" cy="421" rx="11" ry="5" fill="none" stroke="#333" stroke-width="1" stroke-dasharray="2 1.500"/>
<path d="M1146 421h5l2 14h-9z" fill="url(#gm)" stroke="#333" stroke-width=".6"/><rect x="1146" y="416" width="5" height="5" fill="#333"/><path d="M1146 417l-5-2v6l5-2zM1151 417l5-2v6l-5-2z" fill="#ddd"/><path d="M1145.500 426h6M1145 430h7" stroke="#333" stroke-width="1.200"/>
<rect x="1163" y="423" width="16" height="12" rx="1" fill="#8a8b8e" stroke="#333" stroke-width=".8"/><path d="M1166.500 423v-3a4.500 4.500 0 0 1 9 0v3" fill="none" stroke="#55565a" stroke-width="2.400"/><circle cx="1171" cy="428" r="1.600" fill="#222"/><rect x="1170.300" y="428" width="1.400" height="4" fill="#222"/>
<rect x="1185" y="421" width="10" height="8" fill="#f4f4f4" stroke="#333" stroke-width=".8"/><path d="M1187 421v-2.500a3 3 0 0 1 6 0v2.500" fill="none" stroke="#f4f4f4" stroke-width="1.800"/><rect x="1189.500" y="423.500" width="1.400" height="3" fill="#222"/><rect x="1193" y="425" width="11" height="11" fill="#fff" stroke="#444" stroke-width=".6"/><rect x="1193" y="425" width="5.500" height="5.500" fill="#999"/><rect x="1198.500" y="430.500" width="5.500" height="5.500" fill="#999"/>
<rect x="1206.500" y="415.500" width="33" height="20" rx="2" fill="#737477" stroke="#7e7f82"/><path d="M1212 418h10v9h-10z" fill="#86878a"/><path d="M1216 420v4h4" stroke="#77787b" stroke-width="2" fill="none"/><path d="M1226 423h10l-5 5z" fill="#5e5f62"/><path d="M1224 429l6 6M1230 429l-6 6" stroke="#66676a" stroke-width="1.400"/>
<rect x="1243.500" y="415.500" width="33" height="20" rx="2" fill="#737477" stroke="#7e7f82"/><path d="M1248 418h14l-14 14z" fill="none" stroke="#86878a" stroke-width="2"/><path d="M1263 423h10l-5 5z" fill="#5e5f62"/><path d="M1261 429l6 6M1267 429l-6 6" stroke="#66676a" stroke-width="1.400"/>
</svg>
<!-- layer list -->
<div class="a" style="left:1087px;top:439px;width:178px;height:91px;background:#5f6063"></div>
<div class="a" style="left:1087px;top:439px;width:3px;height:221px;background:#58595c"></div>
<div class="a" style="left:1265px;top:439px;width:13px;height:221px;background:#5a5b5e;border-left:1px solid #4a4a4d"></div>
<div class="a" style="left:1087px;top:438px;width:191px;height:1px;background:#444"></div>
<div class="a" style="left:1132px;top:469px;width:133px;height:30px;background:linear-gradient(#6f8592,#627885)"></div>
<div class="a" style="left:1111px;top:439px;width:1px;height:91px;background:#404042"></div>
<div class="a" style="left:1131px;top:439px;width:1px;height:91px;background:#404042"></div>
<div class="a" style="left:1132px;top:468px;width:133px;height:1px;background:#404042"></div>
<div class="a" style="left:1090px;top:499px;width:175px;height:1px;background:#404042"></div>
<div class="a" style="left:1090px;top:530px;width:175px;height:1px;background:#404042"></div>
<svg class="a" style="left:1094px;top:449px" width="15" height="10"><use href="#eye"/></svg>
<svg class="a" style="left:1094px;top:479px" width="15" height="10"><use href="#eye"/></svg>
<svg class="a" style="left:1094px;top:510px" width="15" height="10"><use href="#eye"/></svg>
<svg class="a" style="left:1113px;top:475px" width="18" height="16" viewBox="0 0 18 16"><path d="M14 2l2 2-6 6-3-1z" fill="#222"/><path d="M10 8l-8 7 6-9z" fill="#ddd" stroke="#555" stroke-width=".6"/></svg>
<div class="a" style="left:1134px;top:455px;border:5px solid transparent;border-top:6px solid #fff;width:0;height:0"></div>
<svg class="a" style="left:1150px;top:445px" width="22" height="18" viewBox="0 0 22 18"><rect x="0" y="11" width="16" height="6" fill="#c8c8c8"/><rect x="1" y="8" width="20" height="6" rx="1" fill="#8a8a8a"/><rect x="3" y="1" width="14" height="9" fill="#f4f4f4" stroke="#888" stroke-width=".5"/><path d="M4 2.500h2M8 2.500h2M12 2.500h2" stroke="#333" stroke-width="1.400"/><path d="M3 6h14" stroke="#e0409a" stroke-width="1.200"/><path d="M5 7v4" stroke="#e8a0b0" stroke-width="2"/></svg>
<div class="t" style="left:1176px;top:441px;font-size:10.500px;color:#fff;letter-spacing:.3px">100 % 普通</div>
<div class="t" style="left:1176px;top:452px;font-size:10.500px;color:#fff">草稿 : 1</div>
<svg class="a" style="left:1150px;top:470px" width="36" height="28" viewBox="0 0 36 28"><pattern id="chk4" width="8" height="8" patternUnits="userSpaceOnUse"><rect width="8" height="8" fill="#fff"/><rect width="4" height="4" fill="#c4c4c4"/><rect x="4" y="4" width="4" height="4" fill="#c4c4c4"/></pattern><rect x=".5" y=".5" width="35" height="27" fill="#2a2a2a" stroke="#1a2a34"/><rect x="3" y="4" width="30" height="18" fill="url(#chk4)"/><rect x="3" y="22" width="30" height="3" fill="#8a8a8a"/><path d="M15 9q4 0 6 4l2 4M17 13l-2 3" stroke="#888" stroke-width="1" fill="none"/></svg>
<div class="t" style="left:1189px;top:471px;font-size:10.500px;color:#fff;letter-spacing:.3px">100 % 普通</div>
<div class="t" style="left:1190px;top:484px;font-size:10.500px;color:#fff">1</div>
<div class="a" style="left:1138px;top:503px;width:31px;height:24px;background:#fff;border:1px solid #333"></div>
<svg class="a" style="left:1175px;top:502px" width="23" height="23" viewBox="0 0 23 23"><rect x=".5" y=".5" width="22" height="22" fill="#fafafa" stroke="#333"/><path d="M4 3h9l6 6v11H4z" fill="#fff" stroke="#999" stroke-width=".9"/><path d="M13 3v6h6" fill="#e4e4e4" stroke="#999" stroke-width=".9"/></svg>
<div class="t" style="left:1201px;top:514px;font-size:11px;color:#fff">紙張</div>
<div class="a" style="left:1087px;top:659px;width:194px;height:1px;background:#48484a"></div>
<!-- layer bottom icons -->
<svg class="a" style="left:1098px;top:660px" width="182" height="24" viewBox="1098 660 182 24">
<path d="M1101 661h17v14l-6 7h-11z" fill="url(#gw2)" stroke="#444" stroke-width=".7"/><path d="M1118 675h-6v7z" fill="#fff" stroke="#333" stroke-width=".8"/>
<path d="M1123 663h14v17h-14z" fill="url(#gw2)" stroke="#555" stroke-width=".6"/><path d="M1134.500 675l4-2.500 5 1v5.500l-4 2.500-5-1z" fill="#f4f4f4" stroke="#444" stroke-width=".7"/><path d="M1134.500 675l5 1 4-2.500M1139.500 676v5.500" stroke="#666" stroke-width=".6" fill="none"/>
<path d="M1144 662h8l2 2h6v14h-16z" fill="#b4b8bc" stroke="#555" stroke-width=".6"/><path d="M1155 669h11v10l-4 4h-7z" fill="#fff" stroke="#444" stroke-width=".7"/><path d="M1166 679h-4v4z" fill="#eee" stroke="#333" stroke-width=".7"/>
<g fill="#7c7d80" stroke="#4e4f52" stroke-width=".8"><path d="M1174 664h7v6h4l-7.500 9-7.500-9h4z"/><path d="M1196 664h7v6h4l-7.500 8-7.500-8h4z"/><path d="M1191 678h18v3.500h-18z"/></g><path d="M1177.500 667v6M1199.500 667v6" stroke="#3e3f42" stroke-width="2"/>
<linearGradient id="gmk" x1="0" y1="0" x2="1" y2="0"><stop offset="0" stop-color="#a4a5a7"/><stop offset="1" stop-color="#4a4b4e"/></linearGradient><rect x="1211.500" y="663.500" width="21" height="15" fill="url(#gmk)" stroke="#4a4a4c" stroke-width=".8"/><circle cx="1222" cy="671" r="4.300" fill="#fff"/>
<g fill="#606164"><path d="M1240 662h4v14h3l-5 7-5-7h3z"/></g><g fill="#7c7d80"><path d="M1246 664l8 2v6l-8-2z"/><path d="M1244 678l10-4v4l-10 4z"/></g>
<path d="M1260 670h16l-2 13h-12z" fill="#f2f2f2" stroke="#555" stroke-width=".7"/><path d="M1265 672v9M1268 672v9M1271 672v9" stroke="#999" stroke-width="1"/><ellipse cx="1268" cy="669" rx="9" ry="2.600" fill="#ddd" stroke="#444" stroke-width=".8"/><path d="M1264 667q4-6 8 0" stroke="#444" stroke-width="1.400" fill="none"/>
</svg>
<!--/P7-->
<!--SECTIONS-->
<div class="a" style="left:0;top:682px;width:1283px;height:2px;background:#0c0c0c;z-index:9"></div>
<div class="a" style="left:281px;top:682px;width:722px;height:2px;background:#b4b4b4;z-index:9"></div>
<div class="a" style="left:0;top:27px;width:1px;height:657px;background:#3c3c3c;z-index:9"></div>
</body>
</html>
